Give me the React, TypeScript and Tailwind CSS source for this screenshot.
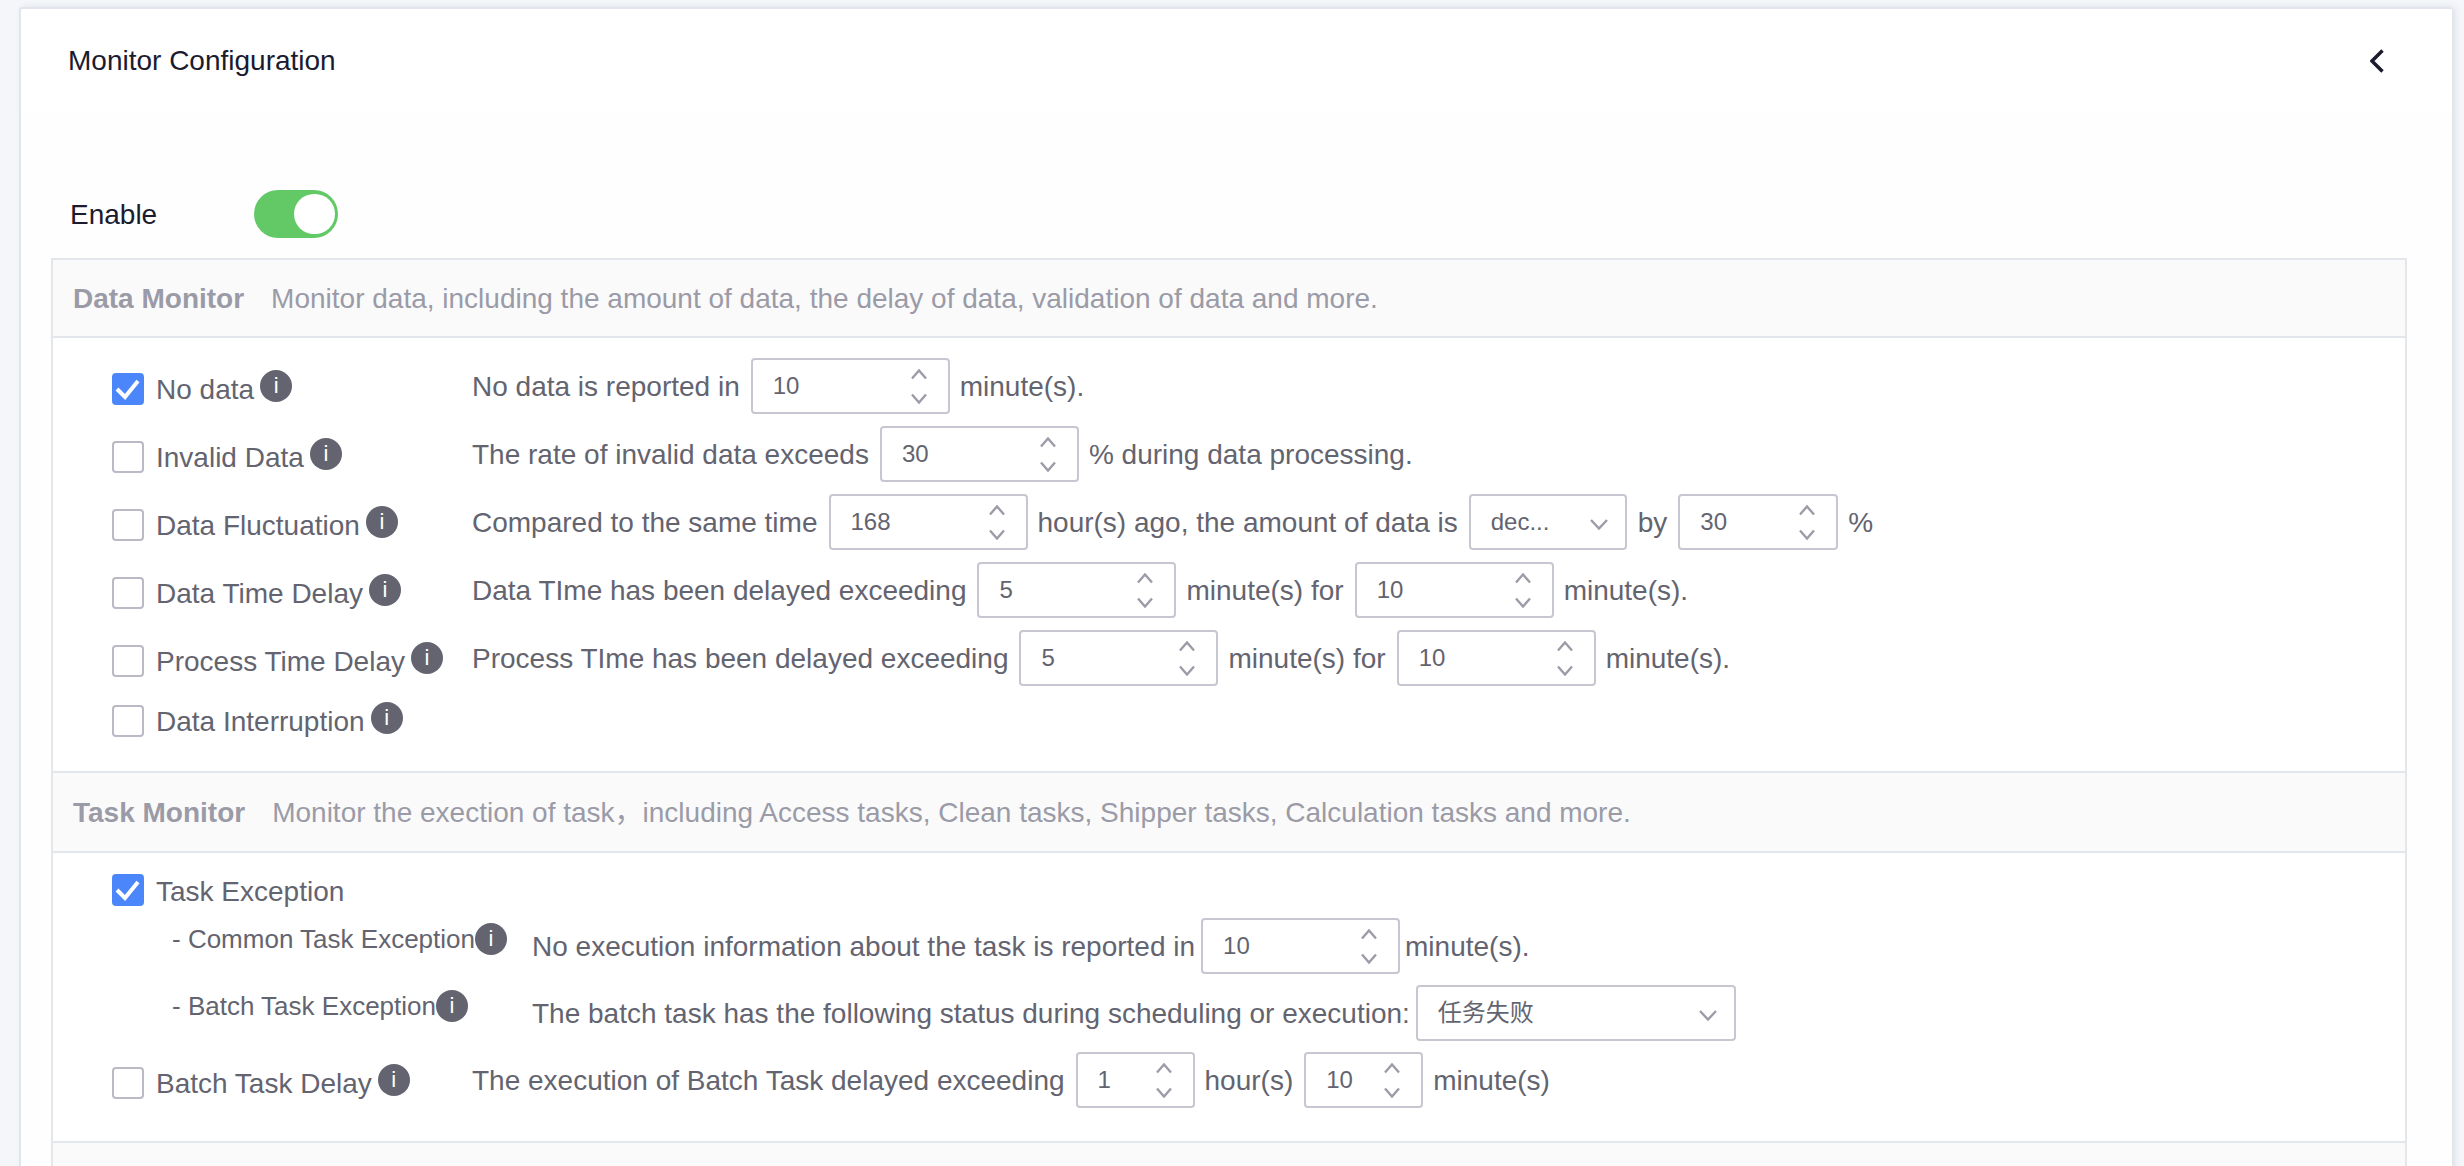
import React from "react";

const font = { fontFamily: '"Liberation Sans", "Noto Sans CJK SC", sans-serif' };

function Chevron({ up, wide, className }: { up?: boolean; wide?: boolean; className?: string }) {
  if (wide) {
    return (
      <svg width="20" height="12" viewBox="0 0 20 12" fill="none" className={className}>
        <path d="M2 2 L10 10.5 L18 2" stroke="#9b9ca7" strokeWidth="2.4" />
      </svg>
    );
  }
  return (
    <svg width="18" height="11" viewBox="0 0 18 11" fill="none" className={className}>
      <path
        d={up ? "M2 9.5 L9 1.5 L16 9.5" : "M2 1.5 L9 9.5 L16 1.5"}
        stroke="#9b9ca7"
        strokeWidth="2.4"
      />
    </svg>
  );
}

function NumberBox({ value, width }: { value: string; width: string }) {
  return (
    <div
      className={`${width} h-[56px] shrink-0 -mr-[1px] flex items-center justify-between rounded-[4px] border-2 border-[#c6c7d0] bg-white pl-[20px] pr-[20px] text-[24px] text-[#63646f]`}
    >
      <span>{value}</span>
      <div className="flex flex-col gap-[13px]">
        <Chevron up />
        <Chevron />
      </div>
    </div>
  );
}

function SelectBox({ value, width }: { value: string; width: string }) {
  return (
    <div
      className={`${width} h-[56px] shrink-0 flex items-center justify-between rounded-[4px] border-2 border-[#c6c7d0] bg-white pl-[20px] pr-[16px] text-[24px] text-[#63646f]`}
    >
      <span>{value}</span>
      <Chevron wide className="mt-[4px]" />
    </div>
  );
}

function Info() {
  return (
    <span className="w-[32px] h-[32px] shrink-0 rounded-full bg-[#63646f] text-white text-[22px] flex items-center justify-center leading-none">
      i
    </span>
  );
}

function Check({ on }: { on?: boolean }) {
  if (on) {
    return (
      <span className="w-[32px] h-[32px] shrink-0 rounded-[4px] bg-[#4b87fa] flex items-center justify-center">
        <svg width="32" height="32" viewBox="0 0 32 32" fill="none">
          <path d="M5 16 L13 24 L26 8" stroke="#fff" strokeWidth="4" />
        </svg>
      </span>
    );
  }
  return <span className="w-[32px] h-[32px] shrink-0 rounded-[4px] border-2 border-[#b9bac5] bg-white" />;
}

function Label({ text, on, info = true }: { text: string; on?: boolean; info?: boolean }) {
  return (
    <div className="w-[360px] shrink-0 flex items-center mt-[6px]">
      <Check on={on} />
      <span className="ml-[12px] mt-[2px] text-[28px] leading-[32px] text-[#63646f] whitespace-nowrap">{text}</span>
      {info && (
        <span className="ml-[6px] mb-[7px]">
          <Info />
        </span>
      )}
    </div>
  );
}

function SubLabel({ text }: { text: string }) {
  return (
    <div className="w-[420px] shrink-0 pl-[60px] flex items-center mb-[14px]">
      <span className="text-[26px] leading-[32px] text-[#63646f] whitespace-nowrap">{text}</span>
      <Info />
    </div>
  );
}

function Row({ children }: { children: React.ReactNode }) {
  return <div className="flex items-center h-[56px]">{children}</div>;
}

function Desc({ children, tight }: { children: React.ReactNode; tight?: boolean }) {
  return (
    <div className={`flex items-center ${tight ? "gap-[6px]" : "gap-[11px]"} text-[28px] text-[#63646f] whitespace-nowrap`}>
      {children}
    </div>
  );
}

function T({ children }: { children: React.ReactNode }) {
  return <span className="mt-[2px]">{children}</span>;
}

function SectionHeader({ title, desc, height }: { title: string; desc: string; height: string }) {
  return (
    <div
      className={`${height} flex items-center gap-[27px] pl-[20px] pt-[2px] bg-[#fafafa] border-b-2 border-[#e3e7eb] text-[28px] whitespace-nowrap`}
    >
      <span className="font-bold text-[#9a9ba7]">{title}</span>
      <span className="text-[#9a9ba7]">{desc}</span>
    </div>
  );
}

export default function App() {
  return (
    <div className="h-screen overflow-hidden bg-[#f4f6fa] pt-[7px] pl-[19px] pr-[12px]" style={font}>
      <div className="h-[1400px] bg-white border-l-2 border-t-2 border-[#e2e5eb] rounded-[3px] shadow-[3px_0_6px_#dcdfe6]">
        {/* Header */}
        <div className="h-[103px] flex items-center justify-between pl-[47px] pr-[68px]">
          <h1 className="text-[28px] text-[#1b1b2f]">Monitor Configuration</h1>
          <svg width="14" height="24" viewBox="0 0 14 24" fill="none">
            <path d="M12.5 1.5 L2 12 L12.5 22.5" stroke="#1b1b2f" strokeWidth="3.5" />
          </svg>
        </div>

        <div className="bg-[#fefefe]">
          {/* Enable */}
          <div className="flex items-center pl-[49px] pt-[78px] pb-[20px]">
            <span className="w-[184px] mt-[2px] text-[28px] text-[#1b1b2f]">Enable</span>
            <div className="w-[84px] h-[48px] rounded-full bg-[#63c967] flex items-center justify-end pr-[3px]">
              <span className="w-[41px] h-[40px] rounded-full bg-white" />
            </div>
          </div>

          <div className="ml-[30px] mr-[45px] border-x-2 border-t-2 border-[#e3e7eb] bg-white">
            {/* Data Monitor */}
            <SectionHeader
              height="h-[78px]"
              title="Data Monitor"
              desc="Monitor data, including the amount of data, the delay of data, validation of data and more."
            />
            <div className="pl-[59px] pt-[20px] pb-[33px] flex flex-col gap-[12px] border-b-2 border-[#e3e7eb]">
              <Row>
                <Label text="No data" on />
                <Desc>
                  <T>No data is reported in</T>
                  <NumberBox value="10" width="w-[199px]" />
                  <T>minute(s).</T>
                </Desc>
              </Row>
              <Row>
                <Label text="Invalid Data" />
                <Desc>
                  <T>The rate of invalid data exceeds</T>
                  <NumberBox value="30" width="w-[199px]" />
                  <T>% during data processing.</T>
                </Desc>
              </Row>
              <Row>
                <Label text="Data Fluctuation" />
                <Desc>
                  <T>Compared to the same time</T>
                  <NumberBox value="168" width="w-[199px]" />
                  <T>hour(s) ago, the amount of data is</T>
                  <SelectBox value="dec..." width="w-[158px]" />
                  <T>by</T>
                  <NumberBox value="30" width="w-[160px]" />
                  <T>%</T>
                </Desc>
              </Row>
              <Row>
                <Label text="Data Time Delay" />
                <Desc>
                  <T>Data TIme has been delayed exceeding</T>
                  <NumberBox value="5" width="w-[199px]" />
                  <T>minute(s) for</T>
                  <NumberBox value="10" width="w-[199px]" />
                  <T>minute(s).</T>
                </Desc>
              </Row>
              <Row>
                <Label text="Process Time Delay" />
                <Desc>
                  <T>Process TIme has been delayed exceeding</T>
                  <NumberBox value="5" width="w-[199px]" />
                  <T>minute(s) for</T>
                  <NumberBox value="10" width="w-[199px]" />
                  <T>minute(s).</T>
                </Desc>
              </Row>
              <div className="flex items-center h-[40px]">
                <Label text="Data Interruption" />
              </div>
            </div>

            {/* Task Monitor */}
            <SectionHeader
              height="h-[80px]"
              title="Task Monitor"
              desc="Monitor the exection of task，including Access tasks, Clean tasks, Shipper tasks, Calculation tasks and more."
            />
            <div className="pl-[59px] pt-[21px] pb-[33px] border-b-2 border-[#e3e7eb]">
              <div className="flex items-center gap-[12px] h-[32px] mb-[12px]">
                <Check on />
                <span className="mt-[3px] text-[28px] text-[#63646f]">Task Exception</span>
              </div>
              <div className="flex flex-col gap-[11px]">
                <Row>
                  <SubLabel text="- Common Task Exception" />
                  <Desc tight>
                    <T>No execution information about the task is reported in</T>
                    <NumberBox value="10" width="w-[199px]" />
                    <T>minute(s).</T>
                  </Desc>
                </Row>
                <Row>
                  <SubLabel text="- Batch Task Exception" />
                  <Desc tight>
                    <T>The batch task has the following status during scheduling or execution:</T>
                    <SelectBox value="任务失败" width="w-[320px]" />
                  </Desc>
                </Row>
                <Row>
                  <Label text="Batch Task Delay" />
                  <Desc>
                    <T>The execution of Batch Task delayed exceeding</T>
                    <NumberBox value="1" width="w-[119px]" />
                    <T>hour(s)</T>
                    <NumberBox value="10" width="w-[119px]" />
                    <T>minute(s)</T>
                  </Desc>
                </Row>
              </div>
            </div>

            <div className="h-[80px] bg-[#fafafa]" />
          </div>
        </div>
      </div>
    </div>
  );
}
